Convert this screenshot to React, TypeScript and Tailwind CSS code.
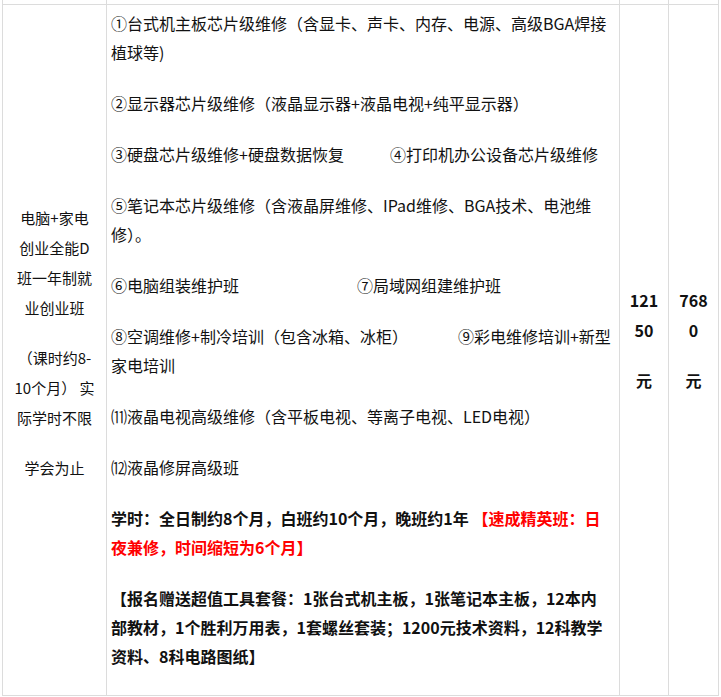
export default function App() {
  const f = { fontFamily: '"Microsoft YaHei","Noto Sans CJK SC",sans-serif' };
  return (
    <div className="w-[721px] h-[697px] bg-white overflow-hidden" style={f}>
      <table className="border-collapse ml-[2px] text-[#111]" style={{ width: 717 }}>
        <tbody>
          <tr className="h-[4px]">
            <td className="border border-t-0 border-[#dcdcdc] w-[104px] p-0"></td>
            <td className="border border-t-0 border-[#dcdcdc] w-[513px] p-0"></td>
            <td className="border border-t-0 border-[#dcdcdc] w-[49px] p-0"></td>
            <td className="border border-t-0 border-[#dcdcdc] p-0"></td>
          </tr>
          <tr className="h-[691px]">
            <td className="border border-[#dcdcdc] align-middle text-center text-[15px] leading-[30px] px-[11px] pb-[14px] break-all">
              <p>电脑+家电创业全能D班一年制就业创业班</p>
              <p className="mt-[20px]">（课时约8-10个月） 实际学时不限</p>
              <p className="mt-[20px]">学会为止</p>
            </td>
            <td className="border border-[#dcdcdc] align-top text-[16px] leading-[29px] pl-[4px] pr-[2px] pt-[4px]">
              <p>①台式机主板芯片级维修（含显卡、声卡、内存、电源、高级BGA焊接植球等)</p>
              <p className="mt-[22px]">②显示器芯片级维修（液晶显示器+液晶电视+纯平显示器）</p>
              <p className="mt-[22px]">③硬盘芯片级维修+硬盘数据恢复<span className="ml-[46px]">④打印机办公设备芯片级维修</span></p>
              <p className="mt-[22px]">⑤笔记本芯片级维修（含液晶屏维修、IPad维修、BGA技术、电池维修）。</p>
              <p className="mt-[22px]">⑥电脑组装维护班<span className="ml-[118px]">⑦局域网组建维护班</span></p>
              <p className="mt-[22px]">⑧空调维修+制冷培训（包含冰箱、冰柜）<span className="ml-[50px]">⑨彩电维修培训+新型家电培训</span></p>
              <p className="mt-[22px]">⑾液晶电视高级维修（含平板电视、等离子电视、LED电视）</p>
              <p className="mt-[22px]">⑿液晶修屏高级班</p>
              <p className="mt-[22px] font-bold pr-[14px]">学时：全日制约8个月，白班约10个月，晚班约1年 <span className="text-[#ff0000]">【速成精英班：日夜兼修，时间缩短为6个月】</span></p>
              <p className="mt-[22px] font-bold pr-[14px]">【报名赠送超值工具套餐：1张台式机主板，1张笔记本主板，12本内部教材，1个胜利万用表，1套螺丝套装；1200元技术资料，12科教学资料、8科电路图纸】</p>
            </td>
            <td className="border border-[#dcdcdc] align-middle text-center font-bold text-[16px] leading-[30px] pb-[20px]">
              <p>121</p><p>50</p><p className="mt-[20px]">元</p>
            </td>
            <td className="border border-[#dcdcdc] align-middle text-center font-bold text-[16px] leading-[30px] pb-[20px]">
              <p>768</p><p>0</p><p className="mt-[20px]">元</p>
            </td>
          </tr>
        </tbody>
      </table>
    </div>
  );
}
